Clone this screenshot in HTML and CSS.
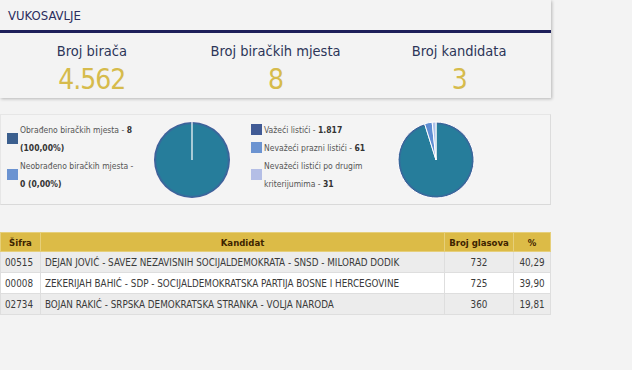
FILE: index.html
```html
<!DOCTYPE html>
<html lang="sr">
<head>
  <meta charset="UTF-8" />
  <title>VUKOSAVLJE</title>
  <link rel="stylesheet" href="styles.css">
</head>
<body>
  <div class="page">
    <section class="region-card">
      <h2 class="region-title">VUKOSAVLJE</h2>
      <div class="stats">
        <div class="stat">
          <div class="stat-label">Broj birača</div>
          <div class="stat-value">4.562</div>
        </div>
        <div class="stat">
          <div class="stat-label">Broj biračkih mjesta</div>
          <div class="stat-value">8</div>
        </div>
        <div class="stat">
          <div class="stat-label">Broj kandidata</div>
          <div class="stat-value">3</div>
        </div>
      </div>
    </section>

    <section class="chart-card">
      <div class="chart-half">
        <ul class="legend">
          <li><span class="swatch c-dark"></span><span>Obrađeno biračkih mjesta - <b>8 (100,00%)</b></span></li>
          <li><span class="swatch c-mid"></span><span>Neobrađeno biračkih mjesta - <b>0 (0,00%)</b></span></li>
        </ul>
        <svg class="pie" width="80" height="80" viewBox="0 0 80 80">
          <defs>
            <radialGradient id="g1" cx="50%" cy="50%" r="50%">
              <stop offset="92%" stop-color="#267d9b" />
              <stop offset="100%" stop-color="#45589a" />
            </radialGradient>
          </defs>
          <circle cx="40" cy="40" r="38" fill="url(#g1)" />
          <line x1="40" y1="40" x2="40" y2="2" stroke="#fff" stroke-width="1.2" />
        </svg>
      </div>
      <div class="chart-half">
        <ul class="legend">
          <li><span class="swatch c-dark2"></span><span>Važeći listići - <b>1.817</b></span></li>
          <li><span class="swatch c-mid"></span><span>Nevažeći prazni listići - <b>61</b></span></li>
          <li><span class="swatch c-light"></span><span>Nevažeći listići po drugim kriterijumima - <b>31</b></span></li>
        </ul>
        <svg class="pie" width="80" height="80" viewBox="0 0 80 80">
          <defs>
            <radialGradient id="g2" cx="50%" cy="50%" r="50%">
              <stop offset="92%" stop-color="#267d9b" />
              <stop offset="100%" stop-color="#45589a" />
            </radialGradient>
          </defs>
          <path d="M40,40 L40,2 A38,38 0 1,1 28.64,3.75 Z" fill="url(#g2)" stroke="#fff" stroke-width="1" />
          <path d="M40,40 L28.64,3.75 A38,38 0 0,1 36.16,2.19 Z" fill="#5f8ed3" stroke="#fff" stroke-width="1" />
          <path d="M40,40 L36.16,2.19 A38,38 0 0,1 40,2 Z" fill="#aec3ea" stroke="#fff" stroke-width="1" />
        </svg>
      </div>
    </section>

    <table class="results">
      <thead>
        <tr>
          <th class="col-code">Šifra</th>
          <th>Kandidat</th>
          <th class="col-votes">Broj glasova</th>
          <th class="col-pct">%</th>
        </tr>
      </thead>
      <tbody>
        <tr>
          <td>00515</td>
          <td>DEJAN JOVIĆ - SAVEZ NEZAVISNIH SOCIJALDEMOKRATA - SNSD - MILORAD DODIK</td>
          <td class="num">732</td>
          <td class="num">40,29</td>
        </tr>
        <tr>
          <td>00008</td>
          <td>ZEKERIJAH BAHIĆ - SDP - SOCIJALDEMOKRATSKA PARTIJA BOSNE I HERCEGOVINE</td>
          <td class="num">725</td>
          <td class="num">39,90</td>
        </tr>
        <tr>
          <td>02734</td>
          <td>BOJAN RAKIĆ - SRPSKA DEMOKRATSKA STRANKA - VOLJA NARODA</td>
          <td class="num">360</td>
          <td class="num">19,81</td>
        </tr>
      </tbody>
    </table>
  </div>
</body>
</html>
```

FILE: styles.css
```css
* {
  box-sizing: border-box;
  margin: 0;
  padding: 0;
}
body {
  background: #f3f3f3;
  font-family: "DejaVu Sans Condensed", "DejaVu Sans", sans-serif;
  color: #333;
}
.page {
  width: 551px;
}

/* Region summary */
.region-card {
  background: #f3f3f3;
  box-shadow: 1px 1px 3px rgba(0, 0, 0, 0.25);
  padding-bottom: 2px;
}
.region-title {
  font-weight: 400;
  font-size: 13px;
  color: #2b2d5e;
  padding: 8px 0 6px 8px;
  border-bottom: 3px solid #1e205a;
  line-height: 16px;
}
.stats {
  display: grid;
  grid-template-columns: repeat(3, 1fr);
  text-align: center;
  padding-top: 9px;
}
.stat-label {
  font-size: 14.5px;
  color: #2c3558;
  line-height: 18px;
}
.stat-value {
  margin-top: 4px;
  font-size: 28px;
  letter-spacing: -1px;
  color: #d6bb4c;
  line-height: 32px;
}

/* Pie charts */
.chart-card {
  margin-top: 16px;
  height: 91px;
  background: #f4f4f4;
  border: 1px solid #e6e6e6;
  border-bottom-color: #d9d9d9;
  border-right-color: #dcdcdc;
  display: grid;
  grid-template-columns: 244px 244px;
  align-items: center;
}
.chart-half {
  display: flex;
  align-items: center;
  padding-left: 6px;
}
.legend {
  list-style: none;
  width: 131px;
  margin-top: -6px;
  font-size: 8.5px;
  line-height: 18px;
  color: #555;
}
.legend li {
  display: flex;
  align-items: center;
  gap: 2px;
}
.legend b {
  color: #333;
}
.swatch {
  flex: none;
  width: 11px;
  height: 11px;
}
.c-dark { background: #3b5f8e; }
.c-dark2 { background: #405a95; }
.c-mid { background: #6b93d1; }
.c-light { background: #b4bee6; }
.pie {
  margin-left: 14px;
}

/* Results table */
.results {
  margin-top: 27px;
  width: 100%;
  border-collapse: collapse;
  font-size: 9.8px;
}
.results th {
  background: #dcbb47;
  color: #3e2400;
  font-weight: 700;
  font-size: 9.5px;
  height: 19px;
  border: 1px solid #e6cf7a;
}
.results td {
  height: 21px;
  padding: 0 4px;
  border: 1px solid #dedede;
  color: #3a3a3a;
}
.results tbody tr:nth-child(odd) td {
  background: #ececec;
}
.results tbody tr:nth-child(even) td {
  background: #fff;
}
.col-code { width: 40px; }
.col-votes { width: 69px; }
.col-pct { width: 37px; }
.results td.num {
  text-align: center;
}
```
